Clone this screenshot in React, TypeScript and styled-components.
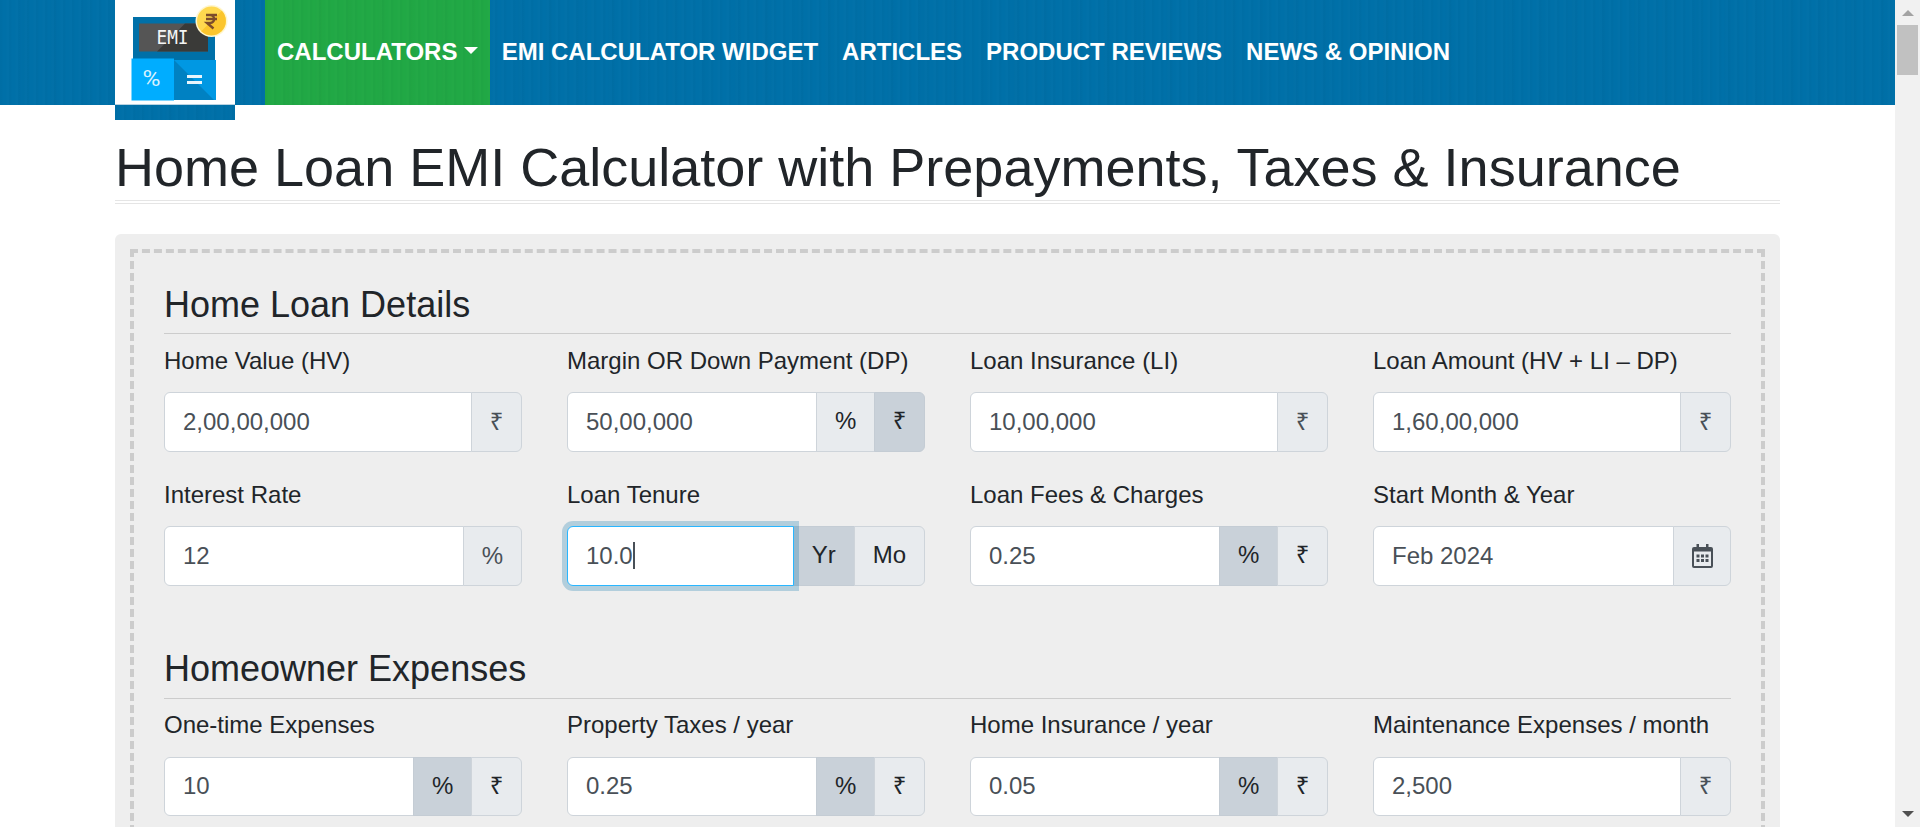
import React from "react";
import styled, { createGlobalStyle, css } from "styled-components";

const Global = createGlobalStyle`
  *, *::before, *::after { box-sizing: border-box; }
  html, body { margin: 0; height: 827px; overflow: hidden; }
  body {
    font-family: "Liberation Sans", Arial, sans-serif;
    font-size: 24px;
    line-height: 36px;
    color: #212529;
    background: #fff;
  }
`;

const weave = css`
  background-image:
    repeating-linear-gradient(90deg, rgba(0, 0, 0, 0.014) 0 2px, transparent 3px 6px, rgba(255, 255, 255, 0.008) 7px 9px),
    repeating-linear-gradient(90deg, transparent 0 17px, rgba(0, 0, 0, 0.012) 23px, transparent 31px);
`;

const Screen = styled.div`
  display: flex;
  height: 827px;
  overflow: hidden;
`;

const Page = styled.div`
  flex: 1;
  min-width: 0;
`;

const Header = styled.header`
  height: 105px;
  padding-left: 115px;
  display: flex;
  align-items: flex-start;
  background-color: #0070a8;
  ${weave}
`;

const Brand = styled.a`
  width: 120px;
  height: 120px;
  margin-right: 30px;
  background-color: #0070a8;
  ${weave}
  svg { display: block; }
`;

const Nav = styled.nav`
  display: flex;
  height: 105px;
`;

const NavLink = styled.a<{ $active?: boolean }>`
  display: flex;
  align-items: center;
  padding: 0 12px 2px;
  font-weight: 700;
  color: #fff;
  white-space: nowrap;
  ${(p) => p.$active && css`
    margin-right: -0.8px;
    background-color: #21a845;
    ${weave}
  `}
`;

const Caret = styled.span`
  margin: 0 0 2px 7px;
  border: 7px solid transparent;
  border-top-color: #fff;
  border-bottom: 0;
`;

const Main = styled.main`
  width: 1665px;
  margin-left: 115px;
`;

const Title = styled.h1`
  margin: 30px 0;
  height: 69px;
  font-size: 54px;
  font-weight: 400;
  line-height: 65px;
  white-space: nowrap;
  border-bottom: 4px double #e5e5e5;
`;

const Panel = styled.section`
  height: 1155px;
  padding: 15px;
  border-radius: 6px;
  background: #eee;
`;

const Form = styled.form`
  height: 1124px;
  padding: 30px;
  border: 4px dashed #ccc;
`;

const SectionTitle = styled.h2`
  margin: 0 0 8.8px;
  height: 51.4px;
  font-size: 36px;
  font-weight: 400;
  line-height: 43px;
  border-bottom: 1px solid #ccc;
`;

const Grid = styled.div`
  display: grid;
  grid-template-columns: repeat(4, 358px);
  column-gap: 45px;
  row-gap: 25px;
  margin-bottom: 61.4px;
`;

const Field = styled.div``;

const Label = styled.label`
  display: block;
  height: 36px;
  margin-bottom: 13.2px;
  white-space: nowrap;
`;

const Group = styled.div`
  display: flex;
  height: 59.6px;
`;

const Value = styled.div<{ $focused?: boolean }>`
  flex: 1;
  min-width: 0;
  display: flex;
  align-items: center;
  padding: 0 18px;
  color: #495057;
  background: #fff;
  border: 1px solid #ced4da;
  border-radius: 6px 0 0 6px;
  ${(p) => p.$focused && css`
    position: relative;
    z-index: 1;
    border-color: #29b6ff;
    box-shadow: 0 0 0 5px rgba(0, 112, 168, 0.25);
  `}
`;

const Cursor = styled.span`
  width: 2px;
  height: 27px;
  background: #495057;
`;

const Unit = styled.span<{ $tone: "plain" | "button" | "active" }>`
  display: flex;
  align-items: center;
  justify-content: center;
  margin-left: -1px;
  padding: 0 18px ${(p) => (p.$tone === "plain" ? "0" : "1.6px")};
  color: ${(p) => (p.$tone === "plain" ? "#495057" : "#212529")};
  background: ${(p) => (p.$tone === "active" ? "#c9d1d9" : "#e8ebee")};
  border: 1px solid ${(p) => (p.$tone === "active" ? "#c4ccd4" : "#ced4da")};
  &:last-child { border-radius: 0 6px 6px 0; }
`;

const Rupee = styled.span`
  width: 12.7px;
  padding-bottom: 2px;
  display: flex;
  justify-content: center;
  font-family: "Open Sans", "Noto Sans", sans-serif;
`;

const Scrollbar = styled.aside`
  width: 25px;
  padding: 10px 0;
  display: flex;
  flex-direction: column;
  align-items: center;
  background: #f1f1f1;
`;

const Arrow = styled.span<{ $down?: boolean }>`
  border: 6px solid transparent;
  ${(p) => p.$down
    ? css`border-top-color: #505050; border-bottom: 0;`
    : css`border-bottom-color: #a3a3a3; border-top: 0;`}
`;

const Thumb = styled.span`
  width: 21px;
  height: 50px;
  margin: 9px 0 auto;
  background: #c1c1c1;
`;

const Logo = () => (
  <svg width="120" height="105" viewBox="0 0 120 105">
    <rect width="120" height="104" fill="#fff" />
    <rect y="104" width="120" height="1" fill="#b9d3e2" />
    <rect x="18" y="17" width="82" height="43" fill="#0070a8" />
    <path d="M24 23.500H93V51.500H24Z" fill="#555" />
    <path d="M70 23.500H93V51.500H42Z" fill="#3a3a38" />
    <path d="M16.500 58.500H59V100.500H16.500Z" fill="#00adff" />
    <path d="M59 60H101V100H59Z" fill="#0081c2" />
    <path d="M59 60H101V100H99Z" fill="#0098e3" />
    <text x="57.500" y="44" textAnchor="middle" fontFamily="DejaVu Sans Mono, monospace" fontSize="19" textLength="32" lengthAdjust="spacingAndGlyphs" fill="#f4f4f4">EMI</text>
    <text x="36.500" y="86" textAnchor="middle" fontFamily="Roboto, sans-serif" fontSize="22" textLength="18" lengthAdjust="spacingAndGlyphs" fill="#d8f2ff">%</text>
    <path d="M72 76.500H87M72 82.500H87" stroke="#e8f5fc" strokeWidth="3" />
    <circle cx="96.500" cy="21" r="16" fill="#fff6cf" />
    <circle cx="96.500" cy="21" r="14.500" fill="#ffd84f" />
    <path d="M106.750 10.750A14.500 14.500 0 0 1 86.250 31.250Z" fill="#fbc52d" />
    <path d="M91 15H102M91 19H102M92 15H95C100.500 15 100.500 23 95 23H92L98.500 28.500" fill="none" stroke="#7c4b2b" strokeWidth="2.400" />
  </svg>
);

const CalendarIcon = styled.svg`
  display: block;
  margin: 0 -0.5px;
`;

const Calendar = () => (
  <CalendarIcon width="21" height="24" viewBox="0 0 21 24">
    <path fill="#495057" fillRule="evenodd" d="M2 3H4.500V0H7V3H14V0H16.500V3H19Q21 3 21 5V22Q21 24 19 24H2Q0 24 0 22V5Q0 3 2 3ZM2 7.500V22H19V7.500Z" />
    <path fill="#495057" d="M4.500 10.500H7.500V13.500H4.500ZM9 10.500H12V13.500H9ZM13.500 10.500H16.500V13.500H13.500ZM4.500 15H7.500V18H4.500ZM9 15H12V18H9ZM13.500 15H16.500V18H13.500Z" />
  </CalendarIcon>
);

type Tone = "plain" | "button" | "active";
type FieldData = { label: string; value: string; units: [React.ReactNode, Tone][]; focused?: boolean };

const rupeeSign = <Rupee>₹</Rupee>;
const rupee: [React.ReactNode, Tone][] = [[rupeeSign, "plain"]];
const percentOn: [React.ReactNode, Tone][] = [["%", "active"], [rupeeSign, "button"]];

const loan: FieldData[] = [
  { label: "Home Value (HV)", value: "2,00,00,000", units: rupee },
  { label: "Margin OR Down Payment (DP)", value: "50,00,000", units: [["%", "button"], [rupeeSign, "active"]] },
  { label: "Loan Insurance (LI)", value: "10,00,000", units: rupee },
  { label: "Loan Amount (HV + LI – DP)", value: "1,60,00,000", units: rupee },
  { label: "Interest Rate", value: "12", units: [["%", "plain"]] },
  { label: "Loan Tenure", value: "10.0", units: [["Yr", "active"], ["Mo", "button"]], focused: true },
  { label: "Loan Fees & Charges", value: "0.25", units: percentOn },
  { label: "Start Month & Year", value: "Feb 2024", units: [[<Calendar key="cal" />, "plain"]] },
];

const expenses: FieldData[] = [
  { label: "One-time Expenses", value: "10", units: percentOn },
  { label: "Property Taxes / year", value: "0.25", units: percentOn },
  { label: "Home Insurance / year", value: "0.05", units: percentOn },
  { label: "Maintenance Expenses / month", value: "2,500", units: rupee },
];

const Fields = ({ items }: { items: FieldData[] }) => (
  <Grid>
    {items.map((f) => (
      <Field key={f.label}>
        <Label>{f.label}</Label>
        <Group>
          <Value $focused={f.focused}>
            {f.value}
            {f.focused && <Cursor />}
          </Value>
          {f.units.map(([unit, tone], i) => (
            <Unit key={i} $tone={tone}>{unit}</Unit>
          ))}
        </Group>
      </Field>
    ))}
  </Grid>
);

export default function App() {
  return (
    <>
      <Global />
      <Screen>
        <Page>
          <Header>
            <Brand><Logo /></Brand>
            <Nav>
              <NavLink $active>CALCULATORS<Caret /></NavLink>
              <NavLink>EMI CALCULATOR WIDGET</NavLink>
              <NavLink>ARTICLES</NavLink>
              <NavLink>PRODUCT REVIEWS</NavLink>
              <NavLink>NEWS &amp; OPINION</NavLink>
            </Nav>
          </Header>
          <Main>
            <Title>Home Loan EMI Calculator with Prepayments, Taxes &amp; Insurance</Title>
            <Panel>
              <Form>
                <SectionTitle>Home Loan Details</SectionTitle>
                <Fields items={loan} />
                <SectionTitle>Homeowner Expenses</SectionTitle>
                <Fields items={expenses} />
              </Form>
            </Panel>
          </Main>
        </Page>
        <Scrollbar>
          <Arrow />
          <Thumb />
          <Arrow $down />
        </Scrollbar>
      </Screen>
    </>
  );
}
